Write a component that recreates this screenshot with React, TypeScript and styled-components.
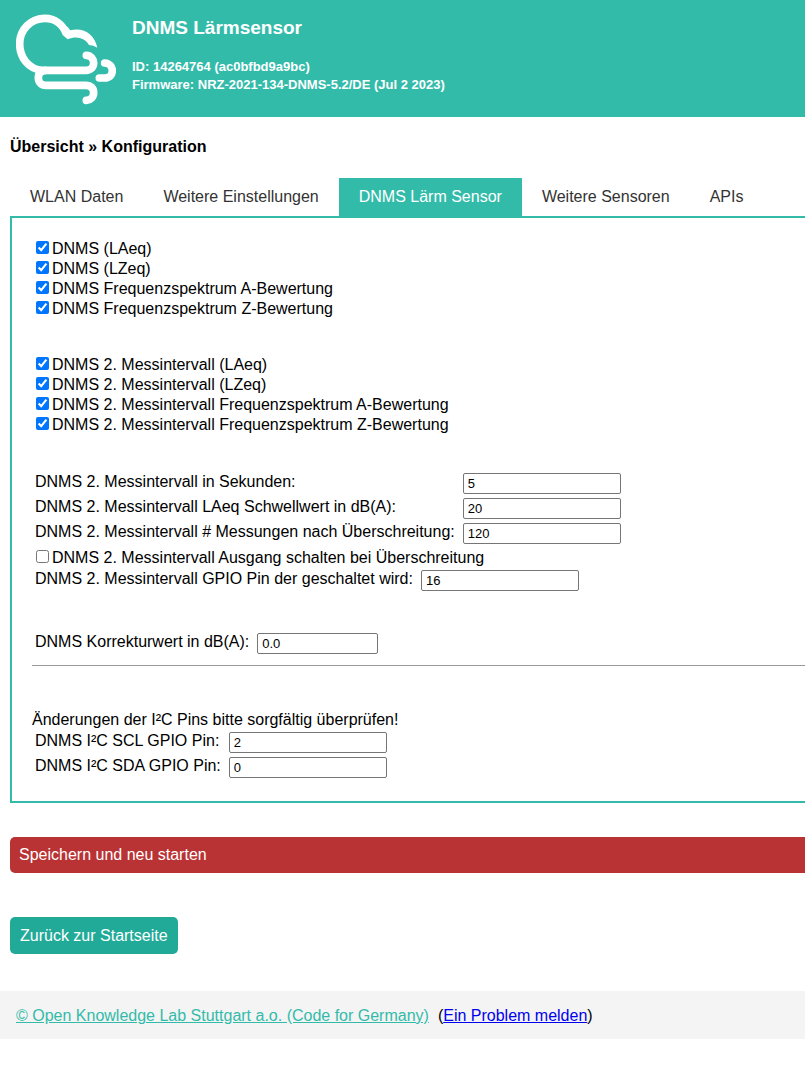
import React, { useState } from "react";
import styled, { createGlobalStyle } from "styled-components";

const teal = "#33bbaa";

const GlobalStyle = createGlobalStyle`
  body {
    margin: 0;
    background: #fff;
    color: #000;
    font: 16px/20px "Liberation Sans", Arial, sans-serif;
  }
`;

const Header = styled.header`
  display: flex;
  align-items: flex-start;
  gap: 16px;
  padding: 14px 16px 12px;
  background: ${teal};
  color: #fff;
`;

const Logo = styled.svg`
  flex: none;
  width: 100px;
  height: 91px;
`;

const Title = styled.h1`
  margin: 4px 0 20px;
  font-size: 19px;
  line-height: 20px;
`;

const DeviceInfo = styled.p`
  margin: 0;
  font-size: 13px;
  line-height: 18px;
  font-weight: bold;
`;

const Main = styled.main`
  display: flex;
  flex-direction: column;
  align-items: stretch;
  padding: 20px 0 37px 10px;
`;

const Breadcrumb = styled.h2`
  margin: 0 0 21px;
  font-size: 16px;
  line-height: 20px;
`;

const Tabs = styled.nav`
  display: flex;
`;

const Tab = styled.button<{ $active: boolean }>`
  padding: 9px 20px;
  border: 0;
  background: ${(p) => (p.$active ? teal : "transparent")};
  color: ${(p) => (p.$active ? "#fff" : "#333")};
  font: inherit;
  white-space: nowrap;
  cursor: pointer;
`;

const Panel = styled.section`
  padding: 21px 0 19px 20px;
  border: 2px solid ${teal};
  border-right: 0;
`;

const CheckGroup = styled.div`
  margin-bottom: 36px;
`;

const CheckRow = styled.label`
  display: flex;
  align-items: flex-start;
`;

const Checkbox = styled.input`
  flex: none;
  width: 13px;
  height: 13px;
  margin: 2px 3px 3px 4px;
`;

const Fields = styled.div<{ $after?: number }>`
  display: grid;
  grid-template-columns: max-content max-content;
  gap: 4px 8px;
  padding: 2px 3px 4px;
  margin-bottom: ${(p) => p.$after ?? 0}px;
`;

const FieldLabel = styled.label`
  line-height: 18px;
`;

const TextInput = styled.input<{ $short?: boolean }>`
  box-sizing: border-box;
  width: ${(p) => (p.$short ? 121 : 158)}px;
  height: 21px;
  padding: 1px 4px;
  border: 1px solid #767676;
  border-radius: 2px;
  background: #fff;
  color: #000;
  font: 13px "Liberation Sans", Arial, sans-serif;
`;

const Divider = styled.hr`
  margin: 7px 0 44px;
  border: 0;
  border-top: 1px solid #999;
`;

const Notice = styled.p`
  margin: 0;
`;

const SaveButton = styled.button`
  margin: 34px 0 44px;
  padding: 8px 9px;
  border: 0;
  border-radius: 5px 0 0 5px;
  background: #b93234;
  color: #fff;
  font: inherit;
  text-align: left;
  cursor: pointer;
`;

const BackLink = styled.a`
  align-self: flex-start;
  padding: 9px 10px 8px;
  border-radius: 5px;
  background: #22aa99;
  color: #fff;
  text-decoration: none;
`;

const Footer = styled.footer`
  display: flex;
  flex-wrap: wrap;
  gap: 0 9px;
  padding: 15px 16px 13px;
  background: #f4f4f4;
`;

const LabLink = styled.a`
  color: ${teal};
`;

const IssueLink = styled.a`
  color: #0000ee;
`;

type FieldDef = { id: string; label: string; value: string; short?: boolean };

const tabs = ["WLAN Daten", "Weitere Einstellungen", "DNMS Lärm Sensor", "Weitere Sensoren", "APIs"];

const measurements = [
  "DNMS (LAeq)",
  "DNMS (LZeq)",
  "DNMS Frequenzspektrum A-Bewertung",
  "DNMS Frequenzspektrum Z-Bewertung",
];

const secondInterval = [
  "DNMS 2. Messintervall (LAeq)",
  "DNMS 2. Messintervall (LZeq)",
  "DNMS 2. Messintervall Frequenzspektrum A-Bewertung",
  "DNMS 2. Messintervall Frequenzspektrum Z-Bewertung",
];

const thresholds: FieldDef[] = [
  { id: "interval", label: "DNMS 2. Messintervall in Sekunden:", value: "5" },
  { id: "threshold", label: "DNMS 2. Messintervall LAeq Schwellwert in dB(A):", value: "20" },
  { id: "count", label: "DNMS 2. Messintervall # Messungen nach Überschreitung:", value: "120" },
];

const outputPin: FieldDef[] = [
  { id: "gpio", label: "DNMS 2. Messintervall GPIO Pin der geschaltet wird:", value: "16" },
];

const correction: FieldDef[] = [
  { id: "correction", label: "DNMS Korrekturwert in dB(A):", value: "0.0", short: true },
];

const busPins: FieldDef[] = [
  { id: "scl", label: "DNMS I²C SCL GPIO Pin:", value: "2" },
  { id: "sda", label: "DNMS I²C SDA GPIO Pin:", value: "0" },
];

function CheckItem({ label, checked = true }: { label: string; checked?: boolean }) {
  return (
    <CheckRow>
      <Checkbox type="checkbox" defaultChecked={checked} />
      {label}
    </CheckRow>
  );
}

function FieldGrid({ fields, after }: { fields: FieldDef[]; after?: number }) {
  return (
    <Fields $after={after}>
      {fields.map((f) => (
        <React.Fragment key={f.id}>
          <FieldLabel htmlFor={f.id}>{f.label}</FieldLabel>
          <TextInput id={f.id} type="text" defaultValue={f.value} $short={f.short} />
        </React.Fragment>
      ))}
    </Fields>
  );
}

function CloudLogo() {
  return (
    <Logo viewBox="48 42 300 273" fill="none" stroke="#fff" strokeWidth="23" aria-hidden="true">
      <path d="M140 211H128C86 209 59 172 59 132C59 89 92 55 135 55C164 55 188 73 199 101" />
      <path
        d="M200 78L211 91C250 80 284 103 292 143Q280 136 267 135C255 115 231 106 203 118L188 105Z"
        fill="#fff"
        stroke="none"
      />
      <path
        d="M259 166C273 167 281 177 281 189C281 202 272 211 258 211H138C124 211 115 220 115 233C115 247 124 256 138 256H258C272 256 281 265 281 278C281 291 272 300 259 301"
        strokeLinecap="round"
      />
      <path d="M314 189C328 190 337 200 337 212C337 225 328 234 314 234H298" strokeLinecap="round" />
    </Logo>
  );
}

export default function App() {
  const [active, setActive] = useState(2);
  return (
    <>
      <GlobalStyle />
      <Header>
        <CloudLogo />
        <div>
          <Title>DNMS Lärmsensor</Title>
          <DeviceInfo>ID: 14264764 (ac0bfbd9a9bc)</DeviceInfo>
          <DeviceInfo>Firmware: NRZ-2021-134-DNMS-5.2/DE (Jul 2 2023)</DeviceInfo>
        </div>
      </Header>
      <Main>
        <Breadcrumb>Übersicht » Konfiguration</Breadcrumb>
        <Tabs>
          {tabs.map((name, i) => (
            <Tab key={name} type="button" $active={i === active} onClick={() => setActive(i)}>
              {name}
            </Tab>
          ))}
        </Tabs>
        <Panel>
          <CheckGroup>
            {measurements.map((m) => (
              <CheckItem key={m} label={m} />
            ))}
          </CheckGroup>
          <CheckGroup>
            {secondInterval.map((m) => (
              <CheckItem key={m} label={m} />
            ))}
          </CheckGroup>
          <FieldGrid fields={thresholds} />
          <CheckItem label="DNMS 2. Messintervall Ausgang schalten bei Überschreitung" checked={false} />
          <FieldGrid fields={outputPin} after={36} />
          <FieldGrid fields={correction} />
          <Divider />
          <Notice>Änderungen der I²C Pins bitte sorgfältig überprüfen!</Notice>
          <FieldGrid fields={busPins} />
        </Panel>
        <SaveButton type="submit">Speichern und neu starten</SaveButton>
        <BackLink href="#">Zurück zur Startseite</BackLink>
      </Main>
      <Footer>
        <LabLink href="#">© Open Knowledge Lab Stuttgart a.o. (Code for Germany)</LabLink>
        <span>
          (<IssueLink href="#">Ein Problem melden</IssueLink>)
        </span>
      </Footer>
    </>
  );
}
